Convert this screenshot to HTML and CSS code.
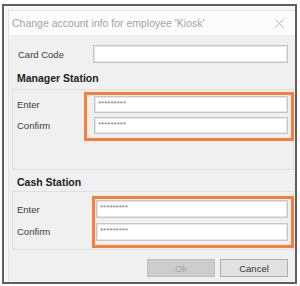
FILE: index.html
```html
<!doctype html>
<html>
<head>
<meta charset="utf-8">
<title>Change account info</title>
<link rel="stylesheet" href="styles.css">
</head>
<body>
<div class="frame">
  <div class="dialog">
    <div class="titlebar">
      <span class="title">Change account info for employee 'Kiosk'</span>
      <svg class="close" width="9" height="9" viewBox="0 0 9 9"><path d="M0.5 0.5L8.5 8.5M8.5 0.5L0.5 8.5" stroke="#b4b4b4" stroke-width="1" fill="none"/></svg>
    </div>
    <div class="content">
      <div class="card-row">
        <span class="card-label">Card Code</span>
        <div class="input"></div>
      </div>
      <div class="heading">Manager Station</div>
      <div class="group g1">
        <div class="labels"><span>Enter</span><span>Confirm</span></div>
        <div class="hl">
          <div class="input pw">*********</div>
          <div class="input pw">*********</div>
        </div>
      </div>
      <div class="heading h2">Cash Station</div>
      <div class="group g2">
        <div class="labels"><span>Enter</span><span>Confirm</span></div>
        <div class="hl">
          <div class="input pw">*********</div>
          <div class="input pw">*********</div>
        </div>
      </div>
      <div class="buttons">
        <button class="btn ok" disabled>Ok</button>
        <button class="btn">Cancel</button>
      </div>
    </div>
  </div>
</div>
</body>
</html>
```
FILE: styles.css
```css
body {
  margin: 0;
  background: #fff;
  font-family: "Liberation Sans", Arial, sans-serif;
}
.frame {
  box-sizing: border-box;
  width: 295px;
  height: 280px;
  margin: 4px 0 0 2px;
  border: 2px solid #5f5f5f;
  padding: 4px 0 0 4px;
  background: #f6f6f6;
  overflow: hidden;
}
.dialog {
  height: 100%;
  background: #f0f0f0;
  border-left: 1px solid #e2e2e2;
  border-top: 1px solid #e6e6e6;
}
.titlebar {
  display: flex;
  align-items: center;
  justify-content: space-between;
  height: 24px;
  padding: 0 11px 0 3px;
  background: #fcfcfc;
  border-bottom: 1px solid #ececec;
}
.title {
  font-size: 10.5px;
  color: #a3a3a3;
}
.content {
  padding: 9px 1px 0 3px;
  font-size: 9.5px;
  color: #3c3c3c;
}
.card-row {
  display: flex;
  align-items: center;
  padding-right: 6px;
}
.card-label {
  width: 75px;
  padding-left: 6px;
}
.card-row .input {
  flex: 1;
}
.input {
  box-sizing: border-box;
  height: 18px;
  background: #fff;
  border: 1px solid #c6c6c6;
  box-shadow: inset 0 0 0 1px #e6e6e6;
}
.heading {
  margin: 8px 0 4px 5px;
  font-size: 10.5px;
  line-height: 14px;
  font-weight: bold;
  color: #222;
}
.heading.h2 {
  margin-top: 5px;
  margin-bottom: 2px;
}
.group {
  box-sizing: border-box;
  display: flex;
  height: 81px;
  border: 1px solid #e0e0e0;
  padding-top: 2px;
}
.g2 {
  height: 59px;
  padding-top: 4px;
}
.labels {
  display: flex;
  flex-direction: column;
  gap: 4px;
  padding: 4px 0 0 4px;
  width: 67px;
}
.labels span {
  line-height: 17px;
}
.g2 .labels {
  width: 75px;
  gap: 5px;
  padding-top: 5px;
}
.hl {
  flex: 1;
  display: flex;
  flex-direction: column;
  gap: 4px;
  align-self: flex-start;
  margin-right: -1px;
  border: 3px solid #fd7c3a;
  padding: 1px 3px 4px 7px;
}
.g2 .hl {
  gap: 5px;
  padding: 1px 3px 4px 1px;
}
.hl .input {
  height: 17px;
}
.g2 .hl .input {
  height: 18px;
}
.pw {
  padding-left: 3px;
  font-size: 8px;
  line-height: 14px;
  color: #7a7a7a;
  overflow: hidden;
}
.buttons {
  display: flex;
  justify-content: flex-end;
  gap: 5px;
  margin-top: 9px;
  padding-right: 6px;
}
.btn {
  box-sizing: border-box;
  width: 68px;
  height: 18px;
  padding: 0;
  font-family: "Liberation Sans", Arial, sans-serif;
  font-size: 9.5px;
  color: #333;
  background: #e1e1e1;
  border: 1px solid #adadad;
}
.btn.ok {
  color: #a8a8a8;
  background: #cccccc;
  border-color: #bfbfbf;
}
```
